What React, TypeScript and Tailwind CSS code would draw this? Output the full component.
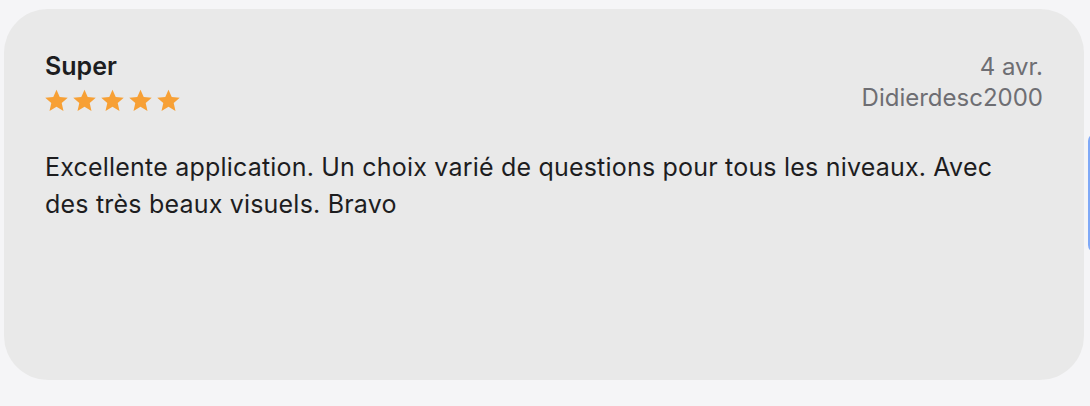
import React from 'react';

const Star = () => (
  <svg viewBox="0 0 24 24" className="w-[25px] h-[25px]" fill="#f7a035">
    <path d="M12 1.6l3.1 7.1 7.7.7-5.8 5.1 1.7 7.6L12 18.1l-6.7 4 1.7-7.6-5.8-5.1 7.7-.7z" />
  </svg>
);

export default function App() {
  return (
    <div className="w-[1090px] h-[406px] bg-[#f5f5f7] flex gap-[4px] pl-[4px] pt-[9px] overflow-hidden font-['Inter',sans-serif]">
      <div className="shrink-0 w-[1080px] h-[371px] rounded-[44px] bg-[#e9e9e9] px-[41px] pt-[42px]">
        <div className="flex justify-between">
          <div>
            <h2 className="text-[25px] leading-[30px] font-semibold text-[#1d1d1f]">Super</h2>
            <div className="flex gap-[3px] mt-[7px] -ml-[1px]">
              <Star />
              <Star />
              <Star />
              <Star />
              <Star />
            </div>
          </div>
          <div className="text-right text-[24px] leading-[31px] text-[#6e6e73]">
            <p>4 avr.</p>
            <p>Didierdesc2000</p>
          </div>
        </div>
        <p className="mt-[36px] max-w-[970px] text-[25px] leading-[37px] tracking-[0.2px] text-[#1d1d1f]">
          Excellente application. Un choix varié de questions pour tous les niveaux. Avec des très beaux visuels. Bravo
        </p>
      </div>
      <div className="shrink-0 mt-[124px] w-[40px] h-[120px] rounded-[8px] bg-[#7fa9f7]" />
    </div>
  );
}
